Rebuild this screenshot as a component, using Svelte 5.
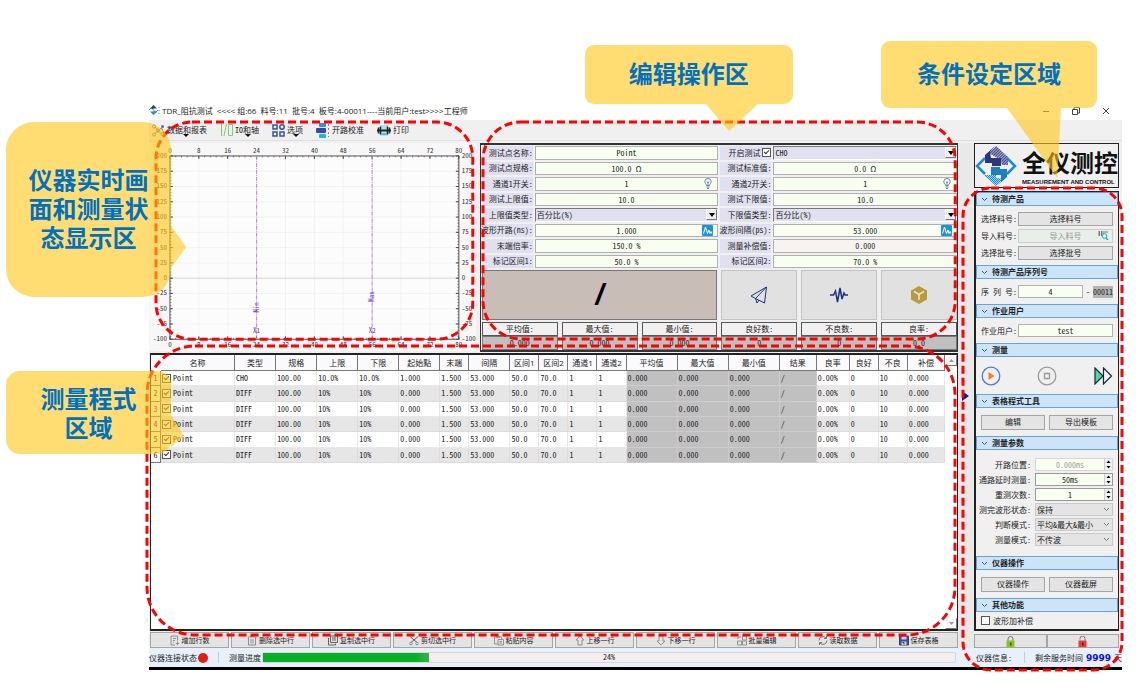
<script lang="ts">
	type Field = { id: string; label: string; value: string; kind?: string };

	const fields: Field[] = [
		{ id: 'name', label: '测试点名称:', value: 'Point' },
		{ id: 'enable', label: '开启测试', value: 'CHO', kind: 'enable' },
		{ id: 'spec', label: '测试点规格:', value: '100.0 Ω' },
		{ id: 'std', label: '测试标准值:', value: '0.0 Ω' },
		{ id: 'ch1', label: '通道1开关:', value: '1', kind: 'bulb' },
		{ id: 'ch2', label: '通道2开关:', value: '1', kind: 'bulb' },
		{ id: 'upper', label: '测试上限值:', value: '10.0' },
		{ id: 'lower', label: '测试下限值:', value: '10.0' },
		{ id: 'upperType', label: '上限值类型:', value: '百分比(%)', kind: 'select' },
		{ id: 'lowerType', label: '下限值类型:', value: '百分比(%)', kind: 'select' },
		{ id: 'open', label: '波形开路(ns):', value: '1.000', kind: 'wave' },
		{ id: 'gap', label: '波形间隔(ps):', value: '53.000', kind: 'wave' },
		{ id: 'end', label: '末端倍率:', value: '150.0 %' },
		{ id: 'comp', label: '测量补偿值:', value: '0.000', kind: 'readonly' },
		{ id: 'mark1', label: '标记区间1:', value: '50.0 %' },
		{ id: 'mark2', label: '标记区间2:', value: '70.0 %' }
	];

	const stats = [
		['平均值:', '0.000'],
		['最大值:', '0.000'],
		['最小值:', '0.000'],
		['良好数:', '0'],
		['不良数:', '0'],
		['良率:', '0.0']
	];

	const columns: [string, number][] = [
		['名称', 74], ['类型', 41], ['规格', 41], ['上限', 41], ['下限', 41], ['起始點', 41],
		['末端', 29], ['间隔', 41], ['区间1', 29], ['区间2', 29], ['通道1', 29], ['通道2', 29],
		['平均值', 51], ['最大值', 51], ['最小值', 51], ['结果', 37],
		['良率', 33], ['良好', 29], ['不良', 29], ['补偿', 37]
	];

	const tail = ['1.500', '53.000', '50.0', '70.0', '1', '1', '0.000', '0.000', '0.000', '/', '0.00%', '0', '10', '0.000'];
	const diff = ['Point', 'DIFF', '100.00', '10%', '10%', '0.000', ...tail];
	const rows = [['Point', 'CHO', '100.00', '10.0%', '10.0%', '1.000', ...tail], diff, diff, diff, diff, diff];

	const actions = [
		['add', '增加行数'], ['trash', '删除选中行'], ['copy', '复制选中行'], ['cut', '剪切选中行'], ['paste', '粘贴内容'],
		['up', '上移一行'], ['down', '下移一行'], ['batch', '批量编辑'], ['read', '读取数据'], ['save', '保存表格']
	];

	const spins = [
		{ id: 'pos', label: '开路位置:', value: '0.000ns', off: true },
		{ id: 'delay', label: '通路延时测量:', value: '50ms', off: false },
		{ id: 'retry', label: '重测次数:', value: '1', off: false }
	];
	const modes = [
		{ id: 'state', label: '测完波形状态:', value: '保持' },
		{ id: 'judge', label: '判断模式:', value: '平均&最大&最小' },
		{ id: 'mode', label: '测量模式:', value: '不传波' }
	];

	// chart geometry, in viewBox units
	const left = 21;
	const right = 311;
	const top = 13;
	const bottom = 197;
	const px = (v: number) => left + (v * (right - left)) / 80;
	const py = (v: number) => bottom - ((v + 100) * (bottom - top)) / 300;
	const xs = Array.from({ length: 11 }, (_, i) => i * 8);
	const ys = Array.from({ length: 13 }, (_, i) => 200 - i * 25);
	const xMinor = Array.from({ length: 51 }, (_, i) => i * 1.6);
	const yMinor = Array.from({ length: 61 }, (_, i) => 200 - i * 5);
	const markers = [
		{ x: 24, name: 'X1', label: 'Min', y: 165 },
		{ x: 56, name: 'X2', label: 'Max', y: 154 }
	];

	const progress = 24;
</script>

{#snippet outline(radius: number)}
	<svg class="outline" aria-hidden="true"><rect x="2" y="2" rx={radius} /></svg>
{/snippet}

{#snippet sectionTitle(text: string)}
	<h2><svg width="7" height="5" viewBox="0 0 7 5"><path d="M1 1l2.5 2.5L6 1" fill="none" stroke="#456" /></svg>{text}</h2>
{/snippet}

{#snippet actionIcon(name: string)}
	<svg width="10" height="11" viewBox="0 0 10 10" fill="none" stroke="#888" stroke-width=".9">
		{#if name === 'add'}
			<path d="M5 9.5H1V.5h6.500V5M3 3h3M3 5h2M3 7h1M7.500 6v3.500M6 8h3" />
		{:else if name === 'trash'}
			<path d="M.5 1.500h9M3.500 1.500V.5h3v1M1.500 2v7.500h7V2M4 3.500v4.500M6 3.500v4.500" />
		{:else if name === 'copy'}
			<path d="M2.500 .5h7v6.500h-7zM.5 2.500v7h7V8M4 2.500h4M4 4.500h4" stroke="#555" />
		{:else if name === 'cut'}
			<path d="M1 1l7 6M9 1L2 7" stroke="#555" /><circle cx="2" cy="8" r="1.300" /><circle cx="8" cy="8" r="1.300" />
		{:else if name === 'paste'}
			<path d="M4 8.500H.5V1.500h7V4M2.500 .5h3v1.500h-3zM4 4h5.500v5.500H4zM5.500 6h2.500M5.500 7.500h2.500" />
		{:else if name === 'up'}
			<path d="M5 .5L9 4.500H7v5H3v-5H1z" />
		{:else if name === 'down'}
			<path d="M5 9.500L9 5.500H7v-5H3v5H1z" />
		{:else if name === 'batch'}
			<path d="M.5 5.500h4v4h-4zM5.500 5.500h4v4h-4zM5.500 .5h4v4h-4zM1 3.500V1.500h3" />
		{:else if name === 'read'}
			<path d="M1 5a4 4 0 0 1 7-2.500M8.500 .5v2.500H6M9 5a4 4 0 0 1-7 2.500M1.500 9.500V7H4" stroke="#666" />
		{:else}
			<path d="M.5 .5h9v9h-9z" fill="#3a5187" stroke="#223a70" /><path d="M2.500 1h5v3h-5zM2.500 6h5v3.500h-5z" fill="#c9d2e6" stroke="none" /><path d="M3.500 7h1.500v2" stroke="#223" />
		{/if}
	</svg>
{/snippet}

{#snippet field(f: Field)}
	<div class="label" class:with-check={f.kind === 'enable'}>
		<label for={f.id}>{f.label}</label>
		{#if f.kind === 'enable'}<input type="checkbox" checked aria-label={f.label} />{/if}
	</div>
	{#if f.kind === 'select' || f.kind === 'enable'}
		<div class="combo">
			<select id={f.id}><option>{f.value}</option></select>
			<span class="drop"><svg width="6" height="4" viewBox="0 0 6 4"><path d="M0 0h6L3 4z" /></svg></span>
		</div>
	{:else}
		<div class="box" class:readonly={f.kind === 'readonly'}>
			<input id={f.id} value={f.value} readonly={f.kind === 'readonly'} />
			{#if f.kind === 'bulb'}
				<svg width="10" height="11" viewBox="0 0 10 11" fill="none" stroke="#6b7db3">
					<path d="M3.500 7.500C3.500 6 1.800 5.500 1.800 3.700a3.200 3.200 0 0 1 6.400 0C8.200 5.500 6.500 6 6.500 7.500zM3.500 9h3M4 10.500h2M5 7V4M3.800 3.500L5 4.500l1.200-1" />
				</svg>
			{:else if f.kind === 'wave'}
				<svg width="11" height="11" viewBox="0 0 11 11">
					<rect width="11" height="11" rx="1" fill="#1c94dc" />
					<path d="M1.500 8.500L3.500 2l2 6.500L7 5l1 3.500 1-2 .8 2" fill="none" stroke="#fff" />
				</svg>
			{/if}
		</div>
	{/if}
{/snippet}

<div class="page">
	<div class="window">
		<header>
			<svg width="11" height="11" viewBox="0 0 11 11">
				<path d="M4.500 0L8 3.500H4.500V5L1.500 3z" fill="#2b3f86" />
				<path d="M4.500 10L1 6.500h3.500V5L8 7z" fill="#1f8fd0" />
				<path d="M0 5l2-2M9 5L7 7" stroke="#1f8fd0" />
				<path d="M10 2v7" stroke="#a66" stroke-dasharray="1 2" />
			</svg>
			<h1>TDR_阻抗测试&nbsp; &lt;&lt;&lt;&lt; 组:66&nbsp; 料号:11&nbsp; 批号:4&nbsp; 板号:4-00011----当前用户:test&gt;&gt;&gt;&gt;工程师</h1>
			<div class="controls">
				<button aria-label="最小化"><svg width="8" height="8"><path d="M1 4.500h6" /></svg></button>
				<button aria-label="还原"><svg width="8" height="8"><path d="M.5 2.500h5v5h-5zM2 2V.5h5.500V6H6" /></svg></button>
				<button aria-label="关闭"><svg width="8" height="8"><path d="M1 1l6 6M7 1L1 7" /></svg></button>
			</div>
		</header>

		<nav>
			<button>
				<svg width="13" height="13" viewBox="0 0 13 13" fill="none" stroke="#777">
					<path d="M3 3l3 3.500L3 10M6 6.500L9.500 4 12 9M6 6.500l3 3" />
					<circle cx="2" cy="2.500" r="1.500" /><circle cx="2" cy="10.500" r="1.500" /><circle cx="6" cy="6.500" r="1.500" />
					<circle cx="10.500" cy="10" r="1.500" /><circle cx="10.500" cy="2.500" r="1.500" fill="#4a68c8" stroke="none" />
				</svg>
				<span class="menu">数据和报表</span>
			</button>
			<button>
				<svg width="13" height="13" viewBox="0 0 13 13" fill="none" stroke="#7fc77f"><path d="M1.500 0v12M6.500 0L4 12M8.500 .5h4v11h-4z" /></svg>
				<span class="menu">IO和轴</span>
			</button>
			<button>
				<svg width="13" height="13" viewBox="0 0 13 13" fill="none" stroke="#3a51a0" stroke-width="1.500"><path d="M1 1h4v4H1zM1 8h4v4H1zM8 8h4v4H8z" /><circle cx="10" cy="3" r="2.200" /></svg>
				<span class="menu">选项</span>
			</button>
			<button>
				<svg width="14" height="15" viewBox="0 0 14 15">
					<rect x="3" width="7" height="4" rx="1" fill="#2f8df5" /><rect y="5" width="10" height="5" rx="1" fill="#3548b0" /><rect x="3" y="11" width="7" height="4" rx="1" fill="#10bcd8" />
					<path d="M12.500 1v13" stroke="#789" stroke-dasharray="2 2" />
				</svg>
				<span>开路校准</span>
			</button>
			<button>
				<svg width="14" height="11" viewBox="0 0 14 11">
					<path d="M3 0h8v11H3z" fill="#b5dff5" /><path d="M0 5.500h14" stroke="#222" stroke-width="2" /><path d="M1.500 2.500v6M12.500 2.500v6M3.500 1.500v8M10.500 1.500v8" stroke="#222" stroke-width="1.500" /><path d="M4.500 8h5v2h-5z" fill="#5bb5e5" />
				</svg>
				<span>打印</span>
			</button>
		</nav>

		<div class="body">
			<main>
				<div class="upper">
					<section class="chart">
						<svg viewBox="0 0 328 209" role="img" aria-label="阻抗波形">
							<rect x={left} y={top} width={right - left} height={bottom - top} fill="#fcfcfd" />
							{#each xs as v}
								<path d="M{px(v)} {top}V{bottom}" stroke="#f2f2f4" />
							{/each}
							{#each ys as v}
								<path d="M{left} {py(v)}H{right}" stroke={v === 0 ? '#d5d5d8' : '#f2f2f4'} />
							{/each}
							{#each xMinor as v}
								<path d="M{px(v)} {top}v1.500M{px(v)} {bottom}v-1.500" stroke="#555" stroke-width=".7" />
							{/each}
							{#each yMinor as v}
								<path d="M{left} {py(v)}h1.500M{right} {py(v)}h-1.500" stroke="#555" stroke-width=".7" />
							{/each}
							{#each xs as v}
								<path d="M{px(v)} {top}v3M{px(v)} {bottom}v-3" stroke="#444" />
								<text x={px(v)} y="10" text-anchor="middle">{v}</text>
								<text x={px(v)} y="205" text-anchor="middle">{v}</text>
							{/each}
							{#each ys as v}
								<path d="M{left} {py(v)}h3M{right} {py(v)}h-3" stroke="#444" />
								<text x="18" y={py(v) + 2} text-anchor="end">{v}</text>
								<text x="314" y={py(v) + 2}>{v}</text>
							{/each}
							<rect x={left} y={top} width={right - left} height={bottom - top} fill="none" stroke="#555" />
							{#each markers as m}
								<path d="M{px(m.x)} {top}V{bottom}" stroke="#b58cc4" stroke-dasharray="4 1 1 1" />
								<text class="mark" x={px(m.x)} y="191" text-anchor="middle">{m.name}</text>
								<text class="mark" transform="translate({px(m.x) + 2} {m.y}) rotate(-90)" text-anchor="middle">{m.label}</text>
							{/each}
						</svg>
						{@render outline(36)}
						<p class="callout live">仪器实时画面和测量状态显示区</p>
					</section>

					<section class="editor">
						<div class="fields">
							{#each fields as f}
								{@render field(f)}
							{/each}
						</div>
						<div class="stats">
							<output class="result">/</output>
							<button class="tile" aria-label="发送">
								<svg width="18" height="18" viewBox="0 0 18 18" fill="none" stroke="#1c2f86" stroke-linejoin="round"><path d="M16.500 1L1 10l4.500 2.500L14.500 17zM16.500 1L5.500 12.500 7 17l2-2.800" /></svg>
							</button>
							<button class="tile" aria-label="波形">
								<svg width="20" height="18" viewBox="0 0 20 18" fill="none" stroke="#1c2f86" stroke-width="1.500"><path d="M1 9h3.500L6.500 5l2 11L11 2l2 11 2-6 1 2h3" /></svg>
							</button>
							<button class="tile" aria-label="模型">
								<svg width="18" height="20" viewBox="0 0 18 20"><path d="M9 1l8 4.500v9L9 19l-8-4.500v-9z" fill="#b89b3c" /><path d="M4 6.500L9 9.500l5-3M9 9.500V15" fill="none" stroke="#eee6c8" stroke-width="1.500" /></svg>
							</button>
							{#each stats as [name, value]}
								<div class="stat"><div>{name}</div><output>{value}</output></div>
							{/each}
						</div>
						{@render outline(38)}
						<p class="callout edit">编辑操作区</p>
					</section>
				</div>

				<section class="program">
					<div class="grid">
						<table>
							<colgroup>
								<col style:width="10px" />
								{#each columns as [, width]}<col style:width="{width}px" />{/each}
							</colgroup>
							<thead>
								<tr><th></th>{#each columns as [name]}<th>{name}</th>{/each}</tr>
							</thead>
							<tbody>
								{#each rows as row, i}
									<tr>
										<th scope="row">{i + 1}</th>
										{#each row as cell, c}
											<td class:shade={c > 11 && c < 16}>
												{#if c === 0}<label><input type="checkbox" checked />{cell}</label>{:else}{cell}{/if}
											</td>
										{/each}
									</tr>
								{/each}
							</tbody>
						</table>
						<div class="scroll">
							<button aria-label="向上滚动"><svg width="5" height="3"><path d="M0 3L2.500 0 5 3z" /></svg></button>
							<button aria-label="向下滚动"><svg width="5" height="3"><path d="M0 0h5L2.500 3z" /></svg></button>
						</div>
					</div>
					{@render outline(48)}
					<p class="callout prog">测量程式区域</p>
				</section>

				<div class="actions">
					{#each actions as [icon, text]}
						<button>{@render actionIcon(icon)}{text}</button>
					{/each}
				</div>
			</main>

			<div class="splitter"><svg width="7" height="10"><path d="M0 0l7 5-7 5z" fill="#101f7c" /></svg></div>

			<aside>
				<div class="logo">
					<svg width="42" height="42" viewBox="0 0 42 42">
						<defs>
							<pattern id="hatch" width="2" height="2" patternUnits="userSpaceOnUse" patternTransform="rotate(45)"><path d="M0 0h1v2H0z" fill="#3b4388" /></pattern>
							<pattern id="mesh" width="2" height="2" patternUnits="userSpaceOnUse"><path d="M0 0h1v1H0zM1 1h1v1H1z" fill="#1b8bd0" /></pattern>
						</defs>
						<path d="M21 1l12 11v8h-6l-1-5-12-7z" fill="#a9add0" />
						<path d="M21 1l12 11v8h-6l-1-5-12-7z" fill="url(#hatch)" />
						<path d="M20 1L10 10v8h7v3h9v-8H16l-1-6z" fill="#2c3580" />
						<path d="M21 41L9 30h12v3l8 1z" fill="#a5d3ee" />
						<path d="M21 41L9 30h12v3l8 1z" fill="url(#mesh)" />
						<path d="M22 41l10-9v-8h-7v-2h-9v8h10v7z" fill="#1b7fc0" />
						<path d="M10 13l-8 8 8 8M32 13l8 8-8 8" fill="none" stroke="#1b8bd0" stroke-width="2.500" />
					</svg>
					<div class="brand"><strong>全仪测控</strong><small>MEASUREMENT AND CONTROL</small></div>
				</div>

				<div class="panel">
					{@render sectionTitle('待测产品')}
					<div class="rows product">
						<div class="line"><span>选择料号:</span><button>选择料号</button></div>
						<div class="line"><span>导入料号:</span><button disabled>导入料号
							<svg width="11" height="9" viewBox="0 0 11 9" fill="none"><path d="M0 0v5M1.500 0v5M3.500 0v5M5 0v3M7 0v2M9 0v2" stroke="#777" /><circle cx="6.500" cy="5" r="2.300" stroke="#12a8c0" /><path d="M8 7l2 2" stroke="#12a8c0" stroke-width="1.500" /></svg>
						</button></div>
						<div class="line"><span>选择批号:</span><button>选择批号</button></div>
					</div>

					{@render sectionTitle('待测产品序列号')}
					<div class="rows single">
						<div class="line"><label for="serial">序 列 号:</label><input id="serial" value="4" /><span class="dash">-</span><mark>00011</mark></div>
					</div>

					{@render sectionTitle('作业用户')}
					<div class="rows single">
						<div class="line"><label for="user">作业用户:</label><input id="user" value="test" /></div>
					</div>

					{@render sectionTitle('测量')}
					<div class="run">
						<button aria-label="开始"><svg width="20" height="20" viewBox="0 0 20 20"><circle cx="10" cy="10" r="8.800" fill="none" stroke="#4a78e8" stroke-width="1.300" /><path d="M7.500 6l6 4-6 4z" fill="#fa7a28" /></svg></button>
						<button aria-label="停止"><svg width="20" height="20" viewBox="0 0 20 20" fill="none" stroke="#999" stroke-width="1.300"><circle cx="10" cy="10" r="8.800" /><path d="M7.500 7.500h5v5h-5z" /></svg></button>
						<button aria-label="连续"><svg width="20" height="18" viewBox="0 0 20 18" stroke="#223" stroke-width="1.200"><path d="M2 1l8 8-8 8z" fill="#3fe0a0" /><path d="M10.500 1L18.500 9l-8 8z" fill="#f4f4f8" /></svg></button>
					</div>

					{@render sectionTitle('表格程式工具')}
					<div class="pair"><button>编辑</button><button>导出模板</button></div>

					{@render sectionTitle('测量参数')}
					<div class="params">
						{#each spins as s}
							<label for={s.id}>{s.label}</label>
							<div class="spin" class:off={s.off}>
								<input id={s.id} value={s.value} disabled={s.off} />
								<svg width="7" height="11" viewBox="0 0 7 11"><path d="M1.500 4h4L3.500 1.500zM1.500 7h4L3.500 9.500z" /></svg>
							</div>
						{/each}
						{#each modes as m}
							<label for={m.id}>{m.label}</label>
							<div class="flat">
								<select id={m.id}><option>{m.value}</option></select>
								<svg width="7" height="5" viewBox="0 0 7 5"><path d="M1 1l2.500 2.500L6 1" fill="none" stroke="#777" /></svg>
							</div>
						{/each}
					</div>

					{@render sectionTitle('仪器操作')}
					<div class="pair"><button>仪器操作</button><button>仪器截屏</button></div>

					{@render sectionTitle('其他功能')}
					<label class="other"><input type="checkbox" />波形加补偿</label>
					<div class="around">
						{@render outline(28)}
						<p class="callout cond">条件设定区域</p>
					</div>
				</div>

				<div class="locks">
					<button aria-label="锁定"><svg width="9" height="11" viewBox="0 0 9 11"><path d="M2 5V3a2.500 2.500 0 0 1 5 0v2" fill="none" stroke="#777" /><path d="M.5 4.500h8V11h-8z" fill="#8cc418" /><path d="M4 6.500h1.500v3H4z" fill="#353" /></svg></button>
					<button aria-label="解锁"><svg width="9" height="11" viewBox="0 0 9 11"><path d="M2 3.500V2.500a2.500 2.500 0 0 1 5 0v2" fill="none" stroke="#777" /><path d="M.5 4.500h8V11h-8z" fill="#ec3b33" /><path d="M4 6.500h1.500v3H4z" fill="#522" /></svg></button>
				</div>
			</aside>
		</div>

		<footer>
			<div class="status">
				<span>仪器连接状态</span><i class="lamp"></i><i class="bar"></i><span>测量进度</span>
				<div class="progress" role="progressbar" aria-label="测量进度" aria-valuenow={progress}>
					<div class="fill" style:width="{progress}%"></div>
					<span>{progress}%</span>
				</div>
			</div>
			<div class="info"><span>仪器信息:</span><i class="bar"></i><span>剩余服务时间</span><b>9999</b><span>天</span></div>
		</footer>
	</div>
</div>

<style>
	:global(body) {
		margin: 0;
		background: #fff;
	}

	.page,
	.page :is(button, input, select, output) {
		font-family: 'Noto Sans Mono CJK SC', 'DejaVu Sans Mono', 'Noto Sans CJK SC', monospace;
		font-size: 8px;
		line-height: 12px;
		color: #222;
	}

	.page {
		padding: 101px 19px 20px 149px;
		overflow: hidden;
	}

	.page :is(div, section, aside, button, input, select, h2, output, th, td) {
		box-sizing: border-box;
		min-width: 0;
	}

	button {
		display: flex;
		align-items: center;
		justify-content: center;
		margin: 0;
		padding: 0;
		border: 1px solid #a5a5a5;
		background: #e4e4e4;
		white-space: nowrap;
	}

	svg {
		flex: none;
	}

	input:not([type='checkbox']) {
		width: 100%;
		margin: 0;
		padding: 0;
		border: 0;
		background: none;
		text-align: center;
	}

	input[type='checkbox'] {
		position: relative;
		appearance: none;
		flex: none;
		width: 9px;
		height: 9px;
		margin: 0;
		border: 1px solid #555;
		background: #fff;
	}

	input[type='checkbox']:checked::after {
		content: '';
		position: absolute;
		left: 1px;
		top: 1px;
		width: 4px;
		height: 2px;
		border: solid #333;
		border-width: 0 0 1px 1px;
		transform: rotate(-45deg);
	}

	select {
		appearance: none;
		width: 100%;
		height: 100%;
		margin: 0;
		padding: 0 1px;
		border: 0;
		border-radius: 0;
		background: none;
	}

	.window {
		background: #f0f0f0;
		border-bottom: 3px solid #000;
	}

	header {
		display: flex;
		align-items: center;
		height: 19px;
		background: #fff;
	}

	h1 {
		flex: 1;
		margin: 0 0 0 2px;
		font: 8px/12px 'Open Sans', 'Noto Sans CJK SC', sans-serif;
	}

	.controls {
		display: flex;
		gap: 2px;
		padding-right: 2px;
	}

	.controls button {
		width: 28px;
		height: 16px;
		border: 0;
		background: none;
	}

	.controls path {
		fill: none;
		stroke: #444;
	}

	nav {
		display: flex;
		align-items: center;
		gap: 13px;
		height: 20px;
		padding: 0 3px;
		border-bottom: 1px solid #e0e0e0;
		margin-bottom: 2px;
	}

	nav button {
		gap: 2px;
		border: 0;
		background: none;
	}

	nav .menu {
		position: relative;
	}

	nav .menu::after {
		content: '';
		position: absolute;
		left: 40%;
		bottom: -1px;
		border: 3px solid transparent;
		border-top-color: #111;
		border-bottom: 0;
	}

	.body {
		display: flex;
	}

	main {
		display: flex;
		flex: 1;
		flex-direction: column;
		min-width: 0;
	}

	.upper {
		display: flex;
		align-items: flex-start;
		gap: 4px;
	}

	.chart {
		position: relative;
		flex: 328;
		background: #f7f7f7;
	}

	.chart > svg:first-child {
		display: block;
		width: 100%;
	}

	.chart text {
		font-size: 7px;
		fill: #333;
	}

	.chart .mark {
		fill: #6a35c0;
	}

	.outline {
		position: absolute;
		z-index: 2;
		overflow: visible;
		pointer-events: none;
	}

	.outline rect {
		width: calc(100% - 4px);
		height: calc(100% - 4px);
		fill: none;
		stroke: #f00;
		stroke-width: 3;
		stroke-dasharray: 8 4;
	}

	.chart .outline {
		top: -23px;
		left: 5px;
		width: calc(100% - 6px);
		height: calc(100% + 13px);
	}

	.editor {
		position: relative;
		flex: 477;
		padding: 1px 0 0 1px;
		border: 1px solid #333;
		border-width: 2px 1px;
	}

	.editor .outline {
		top: -25px;
		left: 0;
		width: 100%;
		height: calc(100% + 16px);
	}

	.fields {
		display: grid;
		grid-template-columns: 51px 1fr 51px 1fr;
		grid-auto-rows: 1fr;
		gap: 2px;
		height: 122px;
	}

	.label {
		display: flex;
		align-items: center;
		justify-content: flex-end;
		min-height: 0;
		background: #e0e0f0;
		white-space: nowrap;
	}

	.label.with-check {
		gap: 2px;
	}

	.box {
		position: relative;
		display: flex;
		align-items: center;
		border: 1px solid #b0b0b0;
		background: #f8fff0;
	}

	.box input {
		height: 11px;
	}

	.box.readonly {
		background: #f7f3f0;
	}

	.box svg {
		position: absolute;
		right: 4px;
	}

	.combo {
		display: flex;
		align-items: center;
		border: 1px solid;
		border-color: #777 #fff #fff #777;
		background: #e0e0f0;
	}

	.combo select {
		height: 11px;
	}

	.page .box input,
	.page .combo select {
		line-height: 11px;
	}

	.drop {
		display: flex;
		flex: none;
		align-items: center;
		justify-content: center;
		width: 9px;
		height: 9px;
		border: 1px solid;
		border-color: #fff #777 #777 #fff;
		background: #eee;
	}

	.stats {
		display: grid;
		grid-template-columns: repeat(6, 1fr);
		grid-template-rows: 50px auto;
		gap: 2px 4px;
		padding-top: 2px;
	}

	.result {
		display: flex;
		grid-column: span 3;
		align-items: center;
		justify-content: center;
		border: 1px solid #777;
		background: #c8bdb7;
	}

	.page .result {
		font: italic bold 30px/40px 'Liberation Sans', sans-serif;
		color: #000;
	}

	.tile {
		border: 1px solid #c4c4c4;
		background: #e1e1e1;
	}

	.stat {
		text-align: center;
	}

	.stat div {
		height: 14px;
		border: 1px solid #555;
		background: #f0f0f0;
	}

	.stat output {
		display: block;
		height: 14px;
		border: 1px solid #777;
		background: #c0c0c0;
	}

	.program {
		position: relative;
		flex: 1;
		display: flex;
		margin-top: 1px;
	}

	.program .outline {
		top: -9px;
		left: -4px;
		width: calc(100% + 3px);
		height: calc(100% + 15px);
	}

	.grid {
		display: flex;
		flex: 1;
		align-items: flex-start;
		margin-left: 1px;
		border: 2px solid #222;
		border-width: 2px 1px;
		background: #fff;
	}

	table {
		flex: 1;
		table-layout: fixed;
		border-collapse: separate;
		border-spacing: 0;
		height: 108px;
		width: 100%;
	}

	th,
	td {
		padding: 0;
		overflow: hidden;
		white-space: nowrap;
	}

	thead th {
		height: 16px;
		border-right: 1px solid #777;
		border-bottom: 1px solid #777;
		background: #fafafd;
		font: 8px/12px 'Open Sans', 'Noto Sans CJK SC', sans-serif;
	}

	thead th:first-child {
		border-color: transparent;
	}

	tbody th {
		border-right: 1px solid #777;
		border-bottom: 1px solid #777;
		font-weight: normal;
		font-size: 8px;
	}

	td {
		padding-left: 1px;
		border-right: 1px solid #e8e8e8;
		border-bottom: 1px solid #e8e8e8;
	}

	tbody tr:nth-child(even) td {
		background: #e6e6e6;
		border-color: #dcdcdc;
	}

	tbody tr td.shade,
	tbody tr:nth-child(even) td.shade {
		background: #c0c0c0;
		border-color: #ccc;
	}

	td label {
		display: flex;
		align-items: center;
		gap: 2px;
	}

	.scroll {
		display: flex;
		flex: none;
		flex-direction: column;
		justify-content: space-between;
		align-self: stretch;
		width: 12px;
	}

	.scroll button {
		height: 11px;
		border-color: #fff #777 #777 #fff;
		background: #f7f7f7;
	}

	.scroll path {
		fill: #999;
	}

	.actions {
		display: flex;
		gap: 2px;
		margin: 1px 0 0 1px;
	}

	.actions button {
		flex: 1;
		gap: 2px;
		height: 16px;
	}

	.page .actions button {
		font-size: 7px;
	}

	.splitter {
		display: flex;
		flex: none;
		align-items: center;
		width: 16px;
		padding-left: 4px;
		background: #e9e9e9;
	}

	aside {
		flex: none;
		width: 145px;
		margin-right: 3px;
	}

	.logo {
		display: flex;
		align-items: center;
		height: 45px;
		margin-bottom: 3px;
		border: 1px solid #222;
	}

	.brand {
		flex: 1;
		margin-left: 5px;
		white-space: nowrap;
	}

	.brand strong {
		display: block;
		font: 700 24px/32px 'Noto Sans CJK SC', sans-serif;
		color: #111;
	}

	.brand small {
		display: block;
		font: bold 6px/8px 'Liberation Sans', sans-serif;
		color: #111;
	}

	.panel {
		position: relative;
		border: 2px solid #222;
		border-width: 1px 1px 2px 2px;
	}

	.around {
		position: absolute;
		inset: -6px -6px -43px -15px;
		pointer-events: none;
	}

	.around .outline {
		inset: 0;
		width: 100%;
		height: 100%;
	}

	h2 {
		display: flex;
		align-items: center;
		gap: 4px;
		height: 14px;
		margin: 0;
		padding-left: 4px;
		border: 1px solid #6ba3d2;
		background: #cce4f7;
		font-size: 8px;
		line-height: 12px;
	}

	.rows {
		display: flex;
		flex-direction: column;
		justify-content: center;
		gap: 3px;
		padding: 0 5px;
	}

	.product {
		height: 59px;
	}

	.single {
		height: 25px;
	}

	.line {
		display: flex;
		align-items: center;
		height: 14px;
		white-space: nowrap;
	}

	.line > :first-child {
		flex: none;
		width: 37px;
	}

	.line button {
		position: relative;
		flex: 1;
		height: 14px;
	}

	.line button:disabled {
		border-color: #ccc;
		background: #e8eee8;
		color: #999;
	}

	.line button svg {
		position: absolute;
		right: 3px;
	}

	.page .line input {
		flex: 1;
		height: 13px;
		border: 1px solid #b0b0b0;
		background: #f8fff0;
	}

	.dash {
		padding: 0 3px;
	}

	mark {
		background: #b4b4b4;
		color: #222;
	}

	.run {
		display: flex;
		align-items: center;
		justify-content: space-between;
		height: 37px;
		padding: 0 5px;
	}

	.run button {
		border: 0;
		background: none;
	}

	.pair {
		display: flex;
		align-items: center;
		gap: 4px;
		height: 28px;
		padding: 0 5px;
	}

	.pair button {
		flex: 1;
		height: 15px;
	}

	.params {
		display: grid;
		grid-template-columns: auto 78px;
		grid-auto-rows: 13px;
		align-items: center;
		justify-content: end;
		gap: 2px 4px;
		height: 106px;
		padding: 8px 5px 0 0;
		text-align: right;
	}

	.spin,
	.flat {
		display: flex;
		align-items: center;
		height: 13px;
		border: 1px solid #999;
		background: #f8fff0;
	}

	.spin svg {
		border-left: 1px solid #ccc;
		background: #f0f0f0;
	}

	.spin.off {
		border-color: #d5d5d5;
	}

	.spin input:disabled {
		color: #999;
	}

	.flat {
		border-color: #c8c8c8;
		background: #e4e4e4;
		padding-right: 2px;
	}

	.other {
		display: flex;
		align-items: center;
		gap: 3px;
		height: 17px;
		padding-left: 5px;
	}

	.locks {
		display: flex;
		margin-top: 3px;
	}

	.locks button {
		flex: 1;
		height: 14px;
	}

	footer {
		display: flex;
		align-items: center;
		height: 19px;
		background: #e8f1fb;
	}

	.status {
		display: flex;
		flex: 1;
		align-items: center;
		white-space: nowrap;
	}

	.lamp {
		width: 10px;
		height: 10px;
		margin: 0 10px 0 1px;
		border-radius: 50%;
		background: #dd2010;
	}

	.bar {
		width: 1px;
		height: 11px;
		margin-right: 10px;
		background: #c5ccd5;
	}

	.progress {
		position: relative;
		flex: 1;
		height: 11px;
		margin-left: 1px;
		border: 1px solid #d8d4d8;
		border-radius: 2px;
		background: #f4efee;
		text-align: center;
		line-height: 8px;
	}

	.fill {
		position: absolute;
		inset: 0 auto 0 0;
		background: linear-gradient(90deg, #06b025 92%, #3cb04c);
	}

	.progress span {
		position: relative;
	}

	.info {
		display: flex;
		flex: none;
		align-items: center;
		width: 166px;
		padding-left: 20px;
		white-space: nowrap;
	}

	.info .bar {
		margin-left: 12px;
	}

	.info b {
		margin: 0 3px;
		font: bold 9px/12px 'DejaVu Sans', sans-serif;
		color: #0a0af0;
	}

	.callout {
		position: absolute;
		z-index: 3;
		display: flex;
		align-items: center;
		justify-content: center;
		box-sizing: border-box;
		margin: 0;
		padding-bottom: 4px;
		border-radius: 9px;
		background: rgba(255, 199, 20, 0.6);
		color: #0070c0;
		font: bold 24px/29px 'Noto Sans CJK SC', sans-serif;
		text-align: center;
	}

	.callout::after {
		content: '';
		position: absolute;
		background: inherit;
	}

	.live {
		top: -21px;
		left: -143px;
		width: 165px;
		height: 175px;
		padding: 0 21px 4px;
		border-radius: 28px;
	}

	.live::after {
		top: 104px;
		left: 100%;
		width: 15px;
		height: 42px;
		clip-path: polygon(0 0, 100% 50%, 0 100%);
	}

	.edit {
		bottom: calc(100% + 41px);
		left: 104px;
		width: 208px;
		height: 59px;
	}

	.edit::after {
		top: 100%;
		left: 121px;
		width: 52px;
		height: 27px;
		clip-path: polygon(0 0, 100% 0, 45% 100%);
	}

	.prog {
		top: 18px;
		left: -143px;
		width: 165px;
		height: 83px;
		padding: 0 34px 2px;
		border-radius: 14px;
	}

	.prog::after {
		top: 44px;
		left: 100%;
		width: 13px;
		height: 32px;
		clip-path: polygon(0 0, 100% 66%, 0 100%);
	}

	.cond {
		top: -145px;
		right: 27px;
		width: 216px;
		height: 67px;
	}

	.cond::after {
		top: 100%;
		left: 126px;
		width: 54px;
		height: 70px;
		clip-path: polygon(0 0, 100% 0, 93% 100%);
	}
</style>
